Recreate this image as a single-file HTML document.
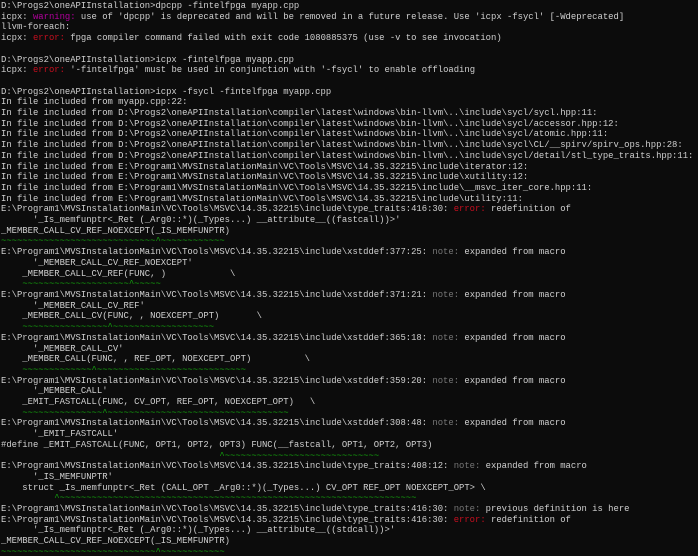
<!DOCTYPE html>
<html><head><meta charset="utf-8"><style>
html,body{margin:0;padding:0;background:#0c0c0c;width:698px;height:556px;overflow:hidden}
pre{margin:0;padding:1px 0 0 1px;font-family:"Liberation Mono",monospace;font-size:8.9px;line-height:10.7px;color:#d0d0d0;white-space:pre}
.w{color:#b4009e}.e{color:#c50f1f}.n{color:#767676}.g{color:#13a10e}
</style></head><body><pre>D:\Progs2\oneAPIInstallation>dpcpp -fintelfpga myapp.cpp
icpx: <span class="w">warning:</span> use of 'dpcpp' is deprecated and will be removed in a future release. Use 'icpx -fsycl' [-Wdeprecated]
llvm-foreach:
icpx: <span class="e">error:</span> fpga compiler command failed with exit code 1080885375 (use -v to see invocation)

D:\Progs2\oneAPIInstallation>icpx -fintelfpga myapp.cpp
icpx: <span class="e">error:</span> '-fintelfpga' must be used in conjunction with '-fsycl' to enable offloading

D:\Progs2\oneAPIInstallation>icpx -fsycl -fintelfpga myapp.cpp
In file included from myapp.cpp:22:
In file included from D:\Progs2\oneAPIInstallation\compiler\latest\windows\bin-llvm\..\include\sycl/sycl.hpp:11:
In file included from D:\Progs2\oneAPIInstallation\compiler\latest\windows\bin-llvm\..\include\sycl/accessor.hpp:12:
In file included from D:\Progs2\oneAPIInstallation\compiler\latest\windows\bin-llvm\..\include\sycl/atomic.hpp:11:
In file included from D:\Progs2\oneAPIInstallation\compiler\latest\windows\bin-llvm\..\include\sycl\CL/__spirv/spirv_ops.hpp:28:
In file included from D:\Progs2\oneAPIInstallation\compiler\latest\windows\bin-llvm\..\include\sycl/detail/stl_type_traits.hpp:11:
In file included from E:\Program1\MVSInstalationMain\VC\Tools\MSVC\14.35.32215\include\iterator:12:
In file included from E:\Program1\MVSInstalationMain\VC\Tools\MSVC\14.35.32215\include\xutility:12:
In file included from E:\Program1\MVSInstalationMain\VC\Tools\MSVC\14.35.32215\include\__msvc_iter_core.hpp:11:
In file included from E:\Program1\MVSInstalationMain\VC\Tools\MSVC\14.35.32215\include\utility:11:
E:\Program1\MVSInstalationMain\VC\Tools\MSVC\14.35.32215\include\type_traits:416:30: <span class="e">error:</span> redefinition of
      '_Is_memfunptr&lt;_Ret (_Arg0::*)(_Types...) __attribute__((fastcall))&gt;'
_MEMBER_CALL_CV_REF_NOEXCEPT(_IS_MEMFUNPTR)
<span class="g">~~~~~~~~~~~~~~~~~~~~~~~~~~~~~^~~~~~~~~~~~~</span>
E:\Program1\MVSInstalationMain\VC\Tools\MSVC\14.35.32215\include\xstddef:377:25: <span class="n">note:</span> expanded from macro
      '_MEMBER_CALL_CV_REF_NOEXCEPT'
    _MEMBER_CALL_CV_REF(FUNC, )            \
    <span class="g">~~~~~~~~~~~~~~~~~~~~^~~~~~</span>
E:\Program1\MVSInstalationMain\VC\Tools\MSVC\14.35.32215\include\xstddef:371:21: <span class="n">note:</span> expanded from macro
      '_MEMBER_CALL_CV_REF'
    _MEMBER_CALL_CV(FUNC, , NOEXCEPT_OPT)       \
    <span class="g">~~~~~~~~~~~~~~~~^~~~~~~~~~~~~~~~~~~~</span>
E:\Program1\MVSInstalationMain\VC\Tools\MSVC\14.35.32215\include\xstddef:365:18: <span class="n">note:</span> expanded from macro
      '_MEMBER_CALL_CV'
    _MEMBER_CALL(FUNC, , REF_OPT, NOEXCEPT_OPT)          \
    <span class="g">~~~~~~~~~~~~~^~~~~~~~~~~~~~~~~~~~~~~~~~~~~</span>
E:\Program1\MVSInstalationMain\VC\Tools\MSVC\14.35.32215\include\xstddef:359:20: <span class="n">note:</span> expanded from macro
      '_MEMBER_CALL'
    _EMIT_FASTCALL(FUNC, CV_OPT, REF_OPT, NOEXCEPT_OPT)   \
    <span class="g">~~~~~~~~~~~~~~~^~~~~~~~~~~~~~~~~~~~~~~~~~~~~~~~~~~</span>
E:\Program1\MVSInstalationMain\VC\Tools\MSVC\14.35.32215\include\xstddef:308:48: <span class="n">note:</span> expanded from macro
      '_EMIT_FASTCALL'
#define _EMIT_FASTCALL(FUNC, OPT1, OPT2, OPT3) FUNC(__fastcall, OPT1, OPT2, OPT3)
                                         <span class="g">^~~~~~~~~~~~~~~~~~~~~~~~~~~~~~</span>
E:\Program1\MVSInstalationMain\VC\Tools\MSVC\14.35.32215\include\type_traits:408:12: <span class="n">note:</span> expanded from macro
      '_IS_MEMFUNPTR'
    struct _Is_memfunptr&lt;_Ret (CALL_OPT _Arg0::*)(_Types...) CV_OPT REF_OPT NOEXCEPT_OPT&gt; \
          <span class="g">^~~~~~~~~~~~~~~~~~~~~~~~~~~~~~~~~~~~~~~~~~~~~~~~~~~~~~~~~~~~~~~~~~~~</span>
E:\Program1\MVSInstalationMain\VC\Tools\MSVC\14.35.32215\include\type_traits:416:30: <span class="n">note:</span> previous definition is here
E:\Program1\MVSInstalationMain\VC\Tools\MSVC\14.35.32215\include\type_traits:416:30: <span class="e">error:</span> redefinition of
      '_Is_memfunptr&lt;_Ret (_Arg0::*)(_Types...) __attribute__((stdcall))&gt;'
_MEMBER_CALL_CV_REF_NOEXCEPT(_IS_MEMFUNPTR)
<span class="g">~~~~~~~~~~~~~~~~~~~~~~~~~~~~~^~~~~~~~~~~~~</span>
</pre></body></html>
